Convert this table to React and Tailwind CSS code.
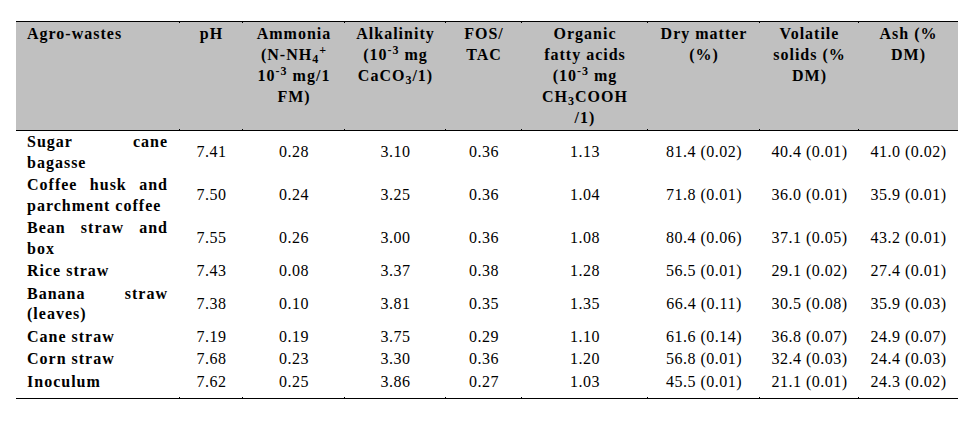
const cols = [164, 63, 102, 101, 76, 126, 112, 99, 99];

const rows = [
  ["Sugar cane bagasse", "7.41", "0.28", "3.10", "0.36", "1.13", "81.4 (0.02)", "40.4 (0.01)", "41.0 (0.02)"],
  ["Coffee husk and parchment coffee", "7.50", "0.24", "3.25", "0.36", "1.04", "71.8 (0.01)", "36.0 (0.01)", "35.9 (0.01)"],
  ["Bean straw and box", "7.55", "0.26", "3.00", "0.36", "1.08", "80.4 (0.06)", "37.1 (0.05)", "43.2 (0.01)"],
  ["Rice straw", "7.43", "0.08", "3.37", "0.38", "1.28", "56.5 (0.01)", "29.1 (0.02)", "27.4 (0.01)"],
  ["Banana straw (leaves)", "7.38", "0.10", "3.81", "0.35", "1.35", "66.4 (0.11)", "30.5 (0.08)", "35.9 (0.03)"],
  ["Cane straw", "7.19", "0.19", "3.75", "0.29", "1.10", "61.6 (0.14)", "36.8 (0.07)", "24.9 (0.07)"],
  ["Corn straw", "7.68", "0.23", "3.30", "0.36", "1.20", "56.8 (0.01)", "32.4 (0.03)", "24.4 (0.03)"],
  ["Inoculum", "7.62", "0.25", "3.86", "0.27", "1.03", "45.5 (0.01)", "21.1 (0.01)", "24.3 (0.02)"],
];

const th = "relative align-top px-[6px] pt-[1px] text-center font-bold tracking-[1px]";

// little Word-style ticks where the column rules meet the horizontal lines
function Ticks({ top, bottom }) {
  return (
    <>
      {top && <span className="absolute left-[-1px] top-0 h-[1px] w-[1px] bg-black" />}
      {bottom && <span className="absolute bottom-0 left-[-1px] h-[1px] w-[1px] bg-black" />}
    </>
  );
}

export default function App() {
  return (
    <div
      className="min-h-[421px] w-[975px] bg-white pl-[16px] pt-[21px] text-black"
      style={{ fontFamily: '"Liberation Serif", "Times New Roman", serif' }}
    >
      <table className="w-[942px] table-fixed border-collapse text-[16px] leading-[21px]">
        <colgroup>
          {cols.map((w, i) => (
            <col key={i} style={{ width: w }} />
          ))}
        </colgroup>
        <thead>
          <tr className="h-[109px] border-y-[1.5px] border-black bg-[#c0c0c0]">
            <th className="align-top pl-[11px] pt-[1px] text-left font-bold tracking-[1px]">Agro-wastes</th>
            <th className={th}>
              <Ticks top bottom />
              pH
            </th>
            <th className={th}>
              <Ticks top bottom />
              Ammonia<br />(N-NH<sub>4</sub><sup>+</sup>
              <br />10<sup>-3</sup> mg/1<br />FM)
            </th>
            <th className={th}>
              <Ticks top bottom />
              Alkalinity<br />(10<sup>-3</sup> mg<br />CaCO<sub>3</sub>/1)
            </th>
            <th className={th}>
              <Ticks top bottom />
              FOS/<br />TAC
            </th>
            <th className={th}>
              <Ticks top bottom />
              Organic<br />fatty acids<br />(10<sup>-3</sup> mg<br />CH<sub>3</sub>COOH<br />/1)
            </th>
            <th className={th}>
              <Ticks top bottom />
              Dry matter<br />(%)
            </th>
            <th className={th}>
              <Ticks top bottom />
              Volatile<br />solids (%<br />DM)
            </th>
            <th className={th}>
              <Ticks top bottom />
              Ash (%<br />DM)
            </th>
          </tr>
        </thead>
        <tbody className="border-b-[1.5px] border-black">
          {rows.map((r, ri) => {
            const last = ri === rows.length - 1;
            const pad = last ? "pt-[1px] pb-[6px]" : "py-[1px]";
            return (
              <tr key={r[0]}>
                <td className={`${pad} pl-[11px] pr-[12px] text-justify align-middle font-bold leading-[20.5px] tracking-[1px]`}>
                  {r[0]}
                </td>
                {r.slice(1).map((v, i) => (
                  <td key={i} className={`relative ${pad} text-center align-middle leading-[20.5px] tracking-[0.5px]`}>
                    {last && <Ticks bottom />}
                    {v}
                  </td>
                ))}
              </tr>
            );
          })}
        </tbody>
      </table>
    </div>
  );
}
